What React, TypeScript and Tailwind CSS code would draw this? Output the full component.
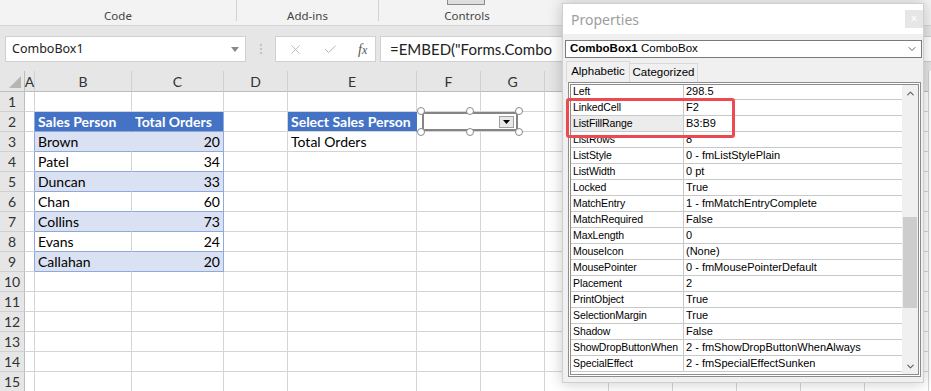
import { Check, ChevronDown, ChevronUp, EllipsisVertical, X } from 'lucide-react';

const COLS = ['A', 'B', 'C', 'D', 'E', 'F', 'G', 'H', 'I', 'J', 'K', 'L', 'M'];
// letters under the properties window are never seen
const HIDDEN_LETTERS = ['H', 'I', 'J', 'K', 'L', 'M'];

const sales: [string, number][] = [
  ['Brown', 20],
  ['Patel', 34],
  ['Duncan', 33],
  ['Chan', 60],
  ['Collins', 73],
  ['Evans', 24],
  ['Callahan', 20],
];

const properties: [string, string][] = [
  ['Left', '298.5'],
  ['LinkedCell', 'F2'],
  ['ListFillRange', 'B3:B9'],
  ['ListRows', '8'],
  ['ListStyle', '0 - fmListStylePlain'],
  ['ListWidth', '0 pt'],
  ['Locked', 'True'],
  ['MatchEntry', '1 - fmMatchEntryComplete'],
  ['MatchRequired', 'False'],
  ['MaxLength', '0'],
  ['MouseIcon', '(None)'],
  ['MousePointer', '0 - fmMousePointerDefault'],
  ['Placement', '2'],
  ['PrintObject', 'True'],
  ['SelectionMargin', 'True'],
  ['Shadow', 'False'],
  ['ShowDropButtonWhen', '2 - fmShowDropButtonWhenAlways'],
  ['SpecialEffect', '2 - fmSpecialEffectSunken'],
];

function Ribbon() {
  return (
    <div className="h-[26px] flex bg-[#f3f3f3] border-b border-[#d6d6d6] shadow-[0_1px_2px_rgba(0,0,0,0.08)] text-[11.5px] text-[#444] font-['Noto_Sans',sans-serif]">
      <div className="w-[236px] flex items-end justify-center pb-[4px]">
        <span className="leading-none">Code</span>
      </div>
      <div className="w-px h-[21px] bg-[#d2d2d2]"></div>
      <div className="w-[141px] flex items-end justify-center pb-[4px]">
        <span className="leading-none">Add-ins</span>
      </div>
      <div className="w-px h-[21px] bg-[#d2d2d2]"></div>
      <div className="w-[176px] flex flex-col justify-between items-center pb-[4px]">
        <div className="w-[38px] h-[5px] border border-t-0 border-[#8a8a8a] bg-[#dedede] -ml-[3px]"></div>
        <span className="leading-none">Controls</span>
      </div>
    </div>
  );
}

function FormulaBar() {
  return (
    <div className="h-[45px] bg-[#e6e6e6] flex items-start pt-[10px] pl-[5px] font-['Noto_Sans',sans-serif]">
      <div className="w-[241px] h-[26px] bg-white border border-[#d0d0d0] flex items-center justify-between pl-[6px] pr-[6px] text-[12.5px] text-[#222]">
        <span>ComboBox1</span>
        <svg width="8" height="5" viewBox="0 0 8 5">
          <polygon points="0,0 8,0 4,5" fill="#8a8a8a" />
        </svg>
      </div>
      <div className="w-[29px] h-[26px] flex items-center justify-center text-[#c2c2c2]">
        <EllipsisVertical size={14} strokeWidth={2} />
      </div>
      <div className="w-[101px] h-[26px] bg-white border border-[#d0d0d0] flex items-center pl-[12px] gap-[20px] text-[#b4b4b4]">
        <X size={15} strokeWidth={1.4} />
        <Check size={15} strokeWidth={1.6} />
        <span className="italic text-[14px] text-[#555] font-['Liberation_Serif',serif]">
          f<span className="text-[12px]">x</span>
        </span>
      </div>
      <div className="ml-[4px] flex-1 h-[26px] bg-white border border-r-0 border-[#d0d0d0] flex items-center pl-[9px] text-[15px] text-[#222] whitespace-nowrap overflow-hidden font-['Lato',sans-serif]">
        =EMBED("Forms.Combo
      </div>
    </div>
  );
}

function cellStyle(r: number, c: string): { text: string; cls: string } {
  const inTable = r >= 2 && r <= 9;
  if (c === 'A' && inTable) return { text: '', cls: 'bg-white border-r-[#8ea9db]' };
  if (r === 2 && c === 'B')
    return { text: 'Sales Person', cls: 'bg-[#4472c4] text-white font-bold border-r-[#4472c4] border-b-[#8ea9db]' };
  if (r === 2 && c === 'C')
    return { text: 'Total Orders', cls: 'bg-[#4472c4] text-white font-bold border-r-[#8ea9db] border-b-[#8ea9db]' };
  if (r === 2 && c === 'E')
    return { text: 'Select Sales Person', cls: 'bg-[#4472c4] text-white font-bold border-r-[#4472c4]' };
  if (r === 3 && c === 'E') return { text: 'Total Orders', cls: 'bg-white' };
  if (r >= 3 && r <= 9 && (c === 'B' || c === 'C')) {
    const [name, total] = sales[r - 3];
    const banded = r % 2 === 1;
    if (c === 'B')
      return {
        text: name,
        cls: banded
          ? 'bg-[#d9e1f2] border-r-[#d9e1f2] border-b-[#8ea9db]'
          : 'bg-white border-b-[#8ea9db]',
      };
    return {
      text: String(total),
      cls: banded
        ? 'bg-[#d9e1f2] border-r-[#8ea9db] border-b-[#8ea9db] justify-end'
        : 'bg-white border-r-[#8ea9db] border-b-[#8ea9db] justify-end',
    };
  }
  return { text: '', cls: 'bg-white' };
}

function Sheet() {
  const rows = Array.from({ length: 15 }, (_, i) => i + 1);
  return (
    <div className="grid grid-cols-[25px_10px_97px_92px_64px_129px_64px_64px_64px_64px_64px_64px_64px_64px] font-['Lato',sans-serif] text-[14px]">
      <div className="h-[21px] bg-[#e6e6e6] border-r border-b border-[#bdbdbd] flex items-end justify-end pr-[3px] pb-[3px]">
        <svg width="12" height="12" viewBox="0 0 12 12">
          <polygon points="12,0 12,12 0,12" fill="#b5b5b5" />
        </svg>
      </div>
      {COLS.map((c) => (
        <div
          key={c}
          className="h-[21px] bg-[#e6e6e6] border-r border-[#d0d0d0] border-b border-b-[#bdbdbd] flex items-center justify-center text-[#333]"
        >
          {HIDDEN_LETTERS.includes(c) ? '' : c}
        </div>
      ))}
      {rows.map((r) => (
        <div key={r} className="contents">
          <div className="h-[20px] bg-[#e6e6e6] border-r border-r-[#bdbdbd] border-b border-b-[#d0d0d0] flex items-center justify-center text-[#333]">
            {r}
          </div>
          {COLS.map((c) => {
            const { text, cls } = cellStyle(r, c);
            return (
              <div
                key={c}
                className={`h-[20px] border-r border-b border-[#d4d4d4] flex items-center px-[3px] whitespace-nowrap text-black ${cls}`}
              >
                {text}
              </div>
            );
          })}
        </div>
      ))}
    </div>
  );
}

function Handle({ pos }: { pos: string }) {
  return <div className={`absolute w-[8px] h-[8px] rounded-full bg-white border-[1.5px] border-[#8a8a8a] ${pos}`}></div>;
}

function ComboOverlay() {
  return (
    <div className="absolute left-[421px] top-[111px] w-[98px] h-[21px]">
      <div className="absolute inset-[1px] border-2 border-[#858585] bg-white">
        <div className="absolute right-[2px] top-[2px] w-[15px] h-[12px] bg-[#e8e8e8] border border-[#a0a0a0] flex items-center justify-center">
          <svg width="7" height="4" viewBox="0 0 7 4">
            <polygon points="0,0 7,0 3.5,4" fill="#000" />
          </svg>
        </div>
      </div>
      <Handle pos="-left-[4px] -top-[4px]" />
      <Handle pos="left-[45px] -top-[4px]" />
      <Handle pos="-right-[4px] -top-[4px]" />
      <Handle pos="-left-[4px] -bottom-[4px]" />
      <Handle pos="left-[45px] -bottom-[4px]" />
      <Handle pos="-right-[4px] -bottom-[4px]" />
    </div>
  );
}

function PropertiesPanel() {
  return (
    <div className="absolute left-[562px] top-[3px] w-[362px] h-[380px] bg-[#f0f0f0] border border-[#cfcfcf] shadow-[0_0_14px_rgba(0,0,0,0.22)] flex flex-col">
      <div className="h-[30px] bg-white flex items-center justify-between pl-[8px]">
        <span className="text-[14px] text-[#9d9d9d] font-['Noto_Sans',sans-serif]">Properties</span>
        <div className="w-[18px] h-[18px] bg-[#e6e6e6] flex items-center justify-center text-white text-[12px] leading-none font-['Noto_Sans',sans-serif]">
          ×
        </div>
      </div>
      <div className="mt-[6px] ml-[2px] mr-[1px] h-[18px] bg-white border border-[#7a7a7a] flex items-center justify-between pl-[4px] pr-[3px] text-[11.5px] text-black font-['Liberation_Sans',Arial,sans-serif]">
        <span>
          <span className="font-bold">ComboBox1</span> ComboBox
        </span>
        <ChevronDown size={12} strokeWidth={1.5} className="text-[#333]" />
      </div>
      <div className="mt-[3px] ml-[3px] h-[21px] flex items-end font-['Liberation_Sans',Arial,sans-serif] text-[11.5px] text-black">
        <div className="h-[21px] w-[64px] flex items-center justify-center bg-[#f0f0f0] border border-b-0 border-[#d9d9d9]">
          Alphabetic
        </div>
        <div className="h-[19px] w-[68px] flex items-center justify-center bg-[#f0f0f0] border border-l-0 border-b-0 border-[#d9d9d9]">
          Categorized
        </div>
      </div>
      <div className="ml-[5px] mr-[2px] h-[295px] border-[3px] border-double border-[#8c8c8c] bg-white flex overflow-hidden font-['Liberation_Sans',Arial,sans-serif] text-[11px] text-black">
        <div className="flex-1 overflow-hidden">
          <div className="-mt-[1px]">
            {properties.map(([k, v]) => (
              <div key={k} className="h-[16px] flex border-b border-[#c8c8c8]">
                <div
                  className={`w-[113px] border-r border-[#c8c8c8] pl-[2px] leading-[15px] whitespace-nowrap overflow-hidden text-[10.5px] tracking-[-0.1px] ${
                    k === 'ListFillRange' ? 'bg-[#ececec]' : ''
                  }`}
                >
                  {k}
                </div>
                <div className="flex-1 pl-[2px] leading-[15px] whitespace-nowrap">{v}</div>
              </div>
            ))}
          </div>
        </div>
        <div className="w-[16px] bg-[#f0f0f0] flex flex-col">
          <div className="h-[16px] flex items-center justify-center text-[#606060]">
            <ChevronUp size={11} strokeWidth={2.5} />
          </div>
          <div className="flex-1">
            <div className="mt-[116px] mx-[1px] h-[91px] bg-[#cdcdcd]"></div>
          </div>
          <div className="h-[16px] flex items-center justify-center text-[#606060]">
            <ChevronDown size={11} strokeWidth={2.5} />
          </div>
        </div>
      </div>
    </div>
  );
}

export default function App() {
  return (
    <div className="relative w-[931px] h-[391px] overflow-hidden bg-white">
      <Ribbon />
      <FormulaBar />
      <Sheet />
      <ComboOverlay />
      <PropertiesPanel />
      {/* red callout round the two linked properties */}
      <div className="absolute left-[566px] top-[98px] w-[169px] h-[40px] border-[3px] border-[#ec4a50] rounded-[3px]"></div>
    </div>
  );
}
